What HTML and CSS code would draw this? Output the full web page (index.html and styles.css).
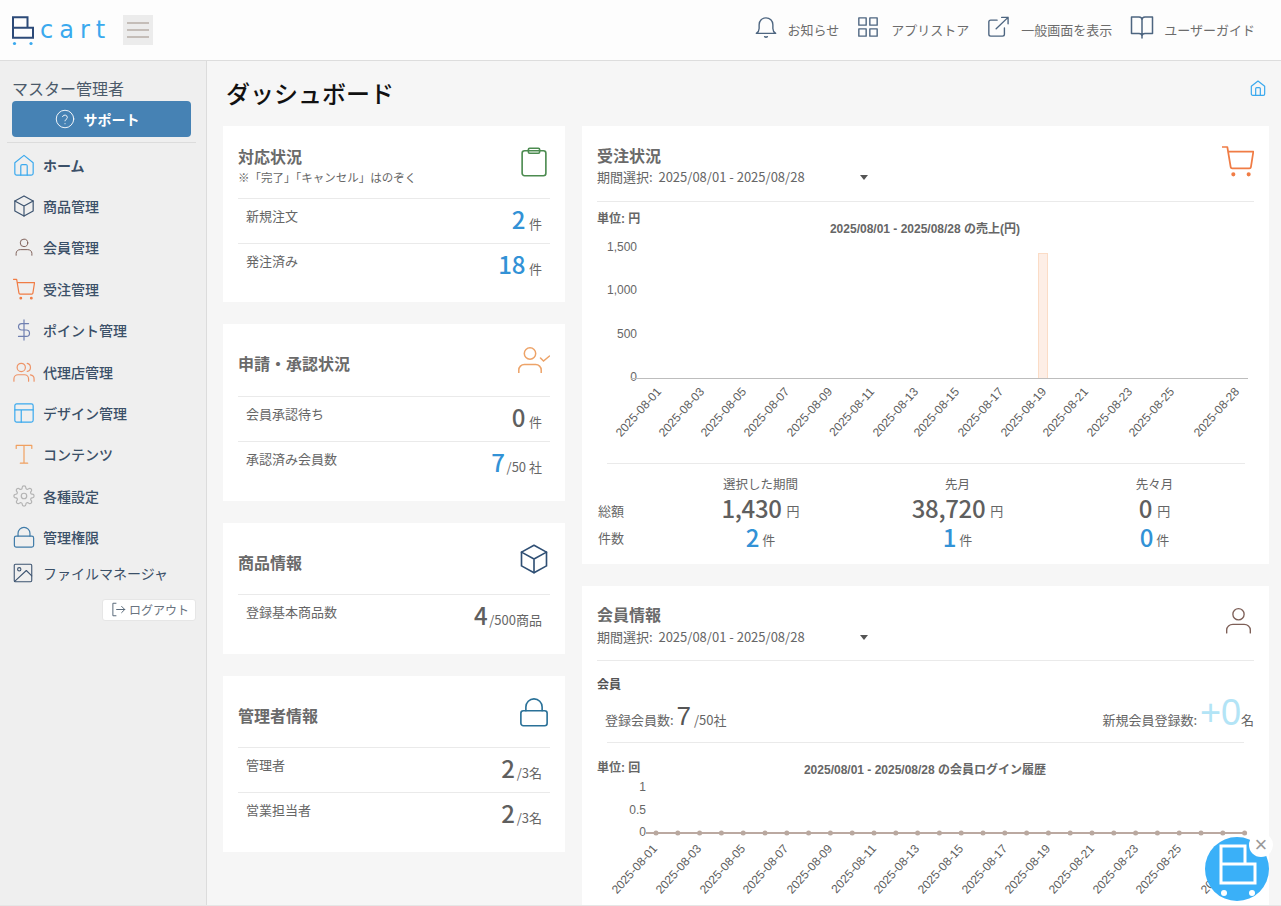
FILE: index.html
```html
<!DOCTYPE html>
<html lang="ja">
<head>
<meta charset="utf-8">
<title>ダッシュボード</title>
<link rel="stylesheet" href="styles.css">
</head>
<body>
<svg class="defs" width="0" height="0" aria-hidden="true">
  <symbol id="i-home" viewBox="0 0 24 24"><path d="M2 9.500 12 1.500l10 8V21a2 2 0 0 1-2 2H4a2 2 0 0 1-2-2z"/><path d="M8.500 23V13a1.500 1.500 0 0 1 1.500-1.500h4a1.500 1.500 0 0 1 1.500 1.500v10"/></symbol>
  <symbol id="i-box" viewBox="0 0 24 24"><path d="M12 1 22 6.500v11L12 23 2 17.500v-11z"/><path d="M2 6.500 12 12l10-5.500M12 12v11"/></symbol>
  <symbol id="i-user" viewBox="0 0 24 24"><circle cx="12" cy="6.500" r="5"/><path d="M1.500 23v-2.500c0-3 2.500-5 5.500-5h10c3 0 5.500 2 5.500 5V23"/></symbol>
  <symbol id="i-cart" viewBox="0 0 24 24"><path d="M.5 1.500h3.500l2.500 15c.1.600.5 1 1.100 1h13c.6 0 1-.4 1.100-1L23.500 5H4.500"/><circle class="dot" cx="8.500" cy="22" r=".9"/><circle class="dot" cx="20" cy="22" r=".9"/></symbol>
  <symbol id="i-dollar" viewBox="0 0 24 24"><path d="M12 1v22M17 5H9.500a3.500 3.500 0 0 0 0 7h5a3.500 3.500 0 0 1 0 7H6"/></symbol>
  <symbol id="i-users" viewBox="0 0 24 24"><circle cx="9" cy="7" r="4.500"/><path d="M1 22v-2.500c0-2.700 2.200-4.500 4.500-4.500h7c2.300 0 4.500 1.800 4.500 4.500V22M15.500 2.600a4.500 4.500 0 0 1 0 8.800M19 15.200c2.300.4 4 2.200 4 4.300V22"/></symbol>
  <symbol id="i-layout" viewBox="0 0 24 24"><rect x="2" y="2" width="20" height="20" rx="2"/><path d="M2 8.500h20M9 8.500V22"/></symbol>
  <symbol id="i-text" viewBox="0 0 24 24"><path d="M3.500 6V2.500h17V6M12 2.500V22M8 22h8"/></symbol>
  <symbol id="i-gear" viewBox="0 0 24 24"><circle cx="12" cy="12" r="3"/><path d="M19.400 15a1.650 1.650 0 0 0 .33 1.820l.06.06a2 2 0 0 1 0 2.830 2 2 0 0 1-2.830 0l-.06-.06a1.650 1.650 0 0 0-1.820-.33 1.650 1.650 0 0 0-1 1.510V21a2 2 0 0 1-2 2 2 2 0 0 1-2-2v-.09A1.650 1.650 0 0 0 9 19.400a1.650 1.650 0 0 0-1.820.33l-.06.06a2 2 0 0 1-2.830 0 2 2 0 0 1 0-2.830l.06-.06a1.650 1.650 0 0 0 .33-1.820 1.650 1.650 0 0 0-1.510-1H3a2 2 0 0 1-2-2 2 2 0 0 1 2-2h.09A1.650 1.650 0 0 0 4.600 9a1.650 1.650 0 0 0-.33-1.820l-.06-.06a2 2 0 0 1 0-2.830 2 2 0 0 1 2.830 0l.06.06a1.650 1.650 0 0 0 1.820.33H9a1.650 1.650 0 0 0 1-1.510V3a2 2 0 0 1 2-2 2 2 0 0 1 2 2v.09a1.650 1.650 0 0 0 1 1.510 1.650 1.650 0 0 0 1.820-.33l.06-.06a2 2 0 0 1 2.830 0 2 2 0 0 1 0 2.830l-.06.06a1.650 1.650 0 0 0-.33 1.820V9a1.650 1.650 0 0 0 1.510 1H21a2 2 0 0 1 2 2 2 2 0 0 1-2 2h-.09a1.650 1.650 0 0 0-1.510 1z"/></symbol>
  <symbol id="i-lock" viewBox="0 0 24 24"><rect x="1.500" y="11" width="21" height="12" rx="2"/><path d="M5.500 11V8a6.500 6.500 0 0 1 13 0v3"/></symbol>
  <symbol id="i-image" viewBox="0 0 24 24"><rect x="1.500" y="1.500" width="21" height="21" rx="1.500"/><circle cx="7.500" cy="7.500" r="2"/><path d="M22.500 15.500 16 9 2 22"/></symbol>
  <symbol id="i-bell" viewBox="0 0 24 24"><path d="M1.500 19h21c-2-1.500-3-3-3-5.500V9.500a7.500 7.500 0 0 0-15 0v4c0 2.500-1 4-3 5.500zM10.500 22.500c.8.700 2.200.7 3 0"/></symbol>
  <symbol id="i-grid" viewBox="0 0 24 24"><rect x="2" y="2" width="8" height="8"/><rect x="14" y="2" width="8" height="8"/><rect x="2" y="14" width="8" height="8"/><rect x="14" y="14" width="8" height="8"/></symbol>
  <symbol id="i-share" viewBox="0 0 24 24"><path d="M11 4.500H4a2 2 0 0 0-2 2V20a2 2 0 0 0 2 2h13a2 2 0 0 0 2-2v-7M10 14 23 1.500M16 1.500h7v7"/></symbol>
  <symbol id="i-book" viewBox="0 0 24 24"><path d="M12 5a3 3 0 0 0-3-3H1.500v16.500H9c1.700 0 3 .8 3 2.500 0-1.700 1.300-2.500 3-2.500h7.500V2H15a3 3 0 0 0-3 3zM12 5v18"/></symbol>
  <symbol id="i-clip" viewBox="0 0 24 24"><rect x="2.500" y="3" width="19" height="20" rx="2"/><rect x="7.500" y="1" width="9" height="4" rx="1"/></symbol>
  <symbol id="i-help" viewBox="0 0 24 24"><circle cx="12" cy="12" r="10.500"/><path d="M9 9.200a3 3 0 0 1 5.800 1c0 2-2.800 2.300-2.800 4M12 17.500v.3"/></symbol>
  <symbol id="i-logout" viewBox="0 0 24 24"><path d="M8 2H3v20h5M9 12h13M17 7l5 5-5 5"/></symbol>
</svg>

<div class="app">
  <header class="topbar">
    <div class="brand">
      <svg class="brand-mark" viewBox="0 0 24 32"><path class="brand-box" d="M1 1.200h14.500v10.500H21v10H1zM1 11.700h14.500"/><circle class="brand-dot" cx="2.500" cy="27.500" r="1.600"/><circle class="brand-dot" cx="19" cy="27.500" r="1.600"/></svg>
      <span class="brand-name">cart</span>
      <button class="burger" type="button" aria-label="menu"><span></span><span></span><span></span></button>
    </div>
    <nav class="toplinks">
      <a class="toplink"><svg class="ico ic-top top-bell"><use href="#i-bell"/></svg>お知らせ</a>
      <a class="toplink"><svg class="ico ic-top top-grid"><use href="#i-grid"/></svg>アプリストア</a>
      <a class="toplink"><svg class="ico ic-top top-share"><use href="#i-share"/></svg>一般画面を表示</a>
      <a class="toplink"><svg class="ico ic-top top-book"><use href="#i-book"/></svg>ユーザーガイド</a>
    </nav>
  </header>

  <div class="body">
    <aside class="sidebar">
      <div class="account">マスター管理者</div>
      <a class="support"><svg class="ico ic-white"><use href="#i-help"/></svg>サポート</a>
      <ul class="menu">
        <li class="menu-item is-active"><svg class="ico c-blue"><use href="#i-home"/></svg>ホーム</li>
        <li class="menu-item"><svg class="ico c-navy"><use href="#i-box"/></svg>商品管理</li>
        <li class="menu-item"><svg class="ico c-brown ico-small"><use href="#i-user"/></svg>会員管理</li>
        <li class="menu-item"><svg class="ico c-orange"><use href="#i-cart"/></svg>受注管理</li>
        <li class="menu-item"><svg class="ico c-indigo"><use href="#i-dollar"/></svg>ポイント管理</li>
        <li class="menu-item"><svg class="ico c-peach"><use href="#i-users"/></svg>代理店管理</li>
        <li class="menu-item"><svg class="ico c-blue"><use href="#i-layout"/></svg>デザイン管理</li>
        <li class="menu-item"><svg class="ico c-amber"><use href="#i-text"/></svg>コンテンツ</li>
        <li class="menu-item"><svg class="ico c-grey"><use href="#i-gear"/></svg>各種設定</li>
        <li class="menu-item"><svg class="ico c-steel"><use href="#i-lock"/></svg>管理権限</li>
        <li class="menu-item is-plain"><svg class="ico c-navy ico-mid"><use href="#i-image"/></svg>ファイルマネージャ</li>
      </ul>
      <div class="logout-row"><a class="logout"><svg class="ico c-slate"><use href="#i-logout"/></svg>ログアウト</a></div>
    </aside>

    <main class="main">
      <div class="page-head">
        <h1>ダッシュボード</h1>
        <svg class="ico crumb c-blue"><use href="#i-home"/></svg>
      </div>

      <div class="columns">
        <div class="col-left">
          <section class="card card-tight">
            <div class="card-head">
              <div><h2>対応状況</h2><p class="note">※「完了」「キャンセル」はのぞく</p></div>
              <svg class="ico big c-green"><use href="#i-clip"/></svg>
            </div>
            <div class="row"><span>新規注文</span><span class="val"><b class="num-blue">2</b><i>件</i></span></div>
            <div class="row"><span>発注済み</span><span class="val"><b class="num-blue">18</b><i>件</i></span></div>
          </section>

          <section class="card">
            <div class="card-head head-center">
              <h2>申請・承認状況</h2>
              <svg class="person-check" viewBox="0 0 32 26"><circle cx="12" cy="6.500" r="5.700"/><path d="M.8 26v-3c0-3 2.500-5.500 5.500-5.500h11.400c3 0 5.500 2.500 5.500 5.500v3M22.500 11l3 3 6-5"/></svg>
            </div>
            <div class="row"><span>会員承認待ち</span><span class="val"><b>0</b><i>件</i></span></div>
            <div class="row"><span>承認済み会員数</span><span class="val"><b class="num-blue">7</b><i class="frac">/50 社</i></span></div>
          </section>

          <section class="card">
            <div class="card-head head-center head-short">
              <h2>商品情報</h2>
              <svg class="ico big c-navy2"><use href="#i-box"/></svg>
            </div>
            <div class="row"><span>登録基本商品数</span><span class="val"><b>4</b><i class="frac">/500商品</i></span></div>
          </section>

          <section class="card">
            <div class="card-head head-center head-short">
              <h2>管理者情報</h2>
              <svg class="ico big c-teal"><use href="#i-lock"/></svg>
            </div>
            <div class="row"><span>管理者</span><span class="val"><b>2</b><i class="frac">/3名</i></span></div>
            <div class="row"><span>営業担当者</span><span class="val"><b>2</b><i class="frac">/3名</i></span></div>
          </section>
        </div>

        <div class="col-right">
          <section class="card wide sales">
            <div class="wide-head">
              <div>
                <h2>受注状況</h2>
                <div class="period"><span>期間選択:&nbsp; 2025/08/01 - 2025/08/28</span><span class="caret"></span></div>
              </div>
              <svg class="ico cart-big c-orange"><use href="#i-cart"/></svg>
            </div>
            <svg class="chart chart-sales" viewBox="597 202 657 261">
              <text class="t-bold" x="597" y="223">単位: 円</text>
              <text class="t-bold mid" x="925" y="233">2025/08/01 - 2025/08/28 の売上(円)</text>
              <text class="t end" x="637" y="251">1,500</text>
              <text class="t end" x="637" y="294">1,000</text>
              <text class="t end" x="637" y="338">500</text>
              <text class="t end" x="637" y="381">0</text>
              <rect class="bar" x="1038.500" y="253.500" width="9" height="125"/>
              <line class="axis" x1="631" y1="378.500" x2="1248" y2="378.500"/>
              <text class="t rot end" transform="rotate(-48 662 392)" x="662" y="392">2025-08-01</text>
              <text class="t rot end" transform="rotate(-48 705 392)" x="705" y="392">2025-08-03</text>
              <text class="t rot end" transform="rotate(-48 747 392)" x="747" y="392">2025-08-05</text>
              <text class="t rot end" transform="rotate(-48 790 392)" x="790" y="392">2025-08-07</text>
              <text class="t rot end" transform="rotate(-48 833 392)" x="833" y="392">2025-08-09</text>
              <text class="t rot end" transform="rotate(-48 875 392)" x="875" y="392">2025-08-11</text>
              <text class="t rot end" transform="rotate(-48 919 392)" x="919" y="392">2025-08-13</text>
              <text class="t rot end" transform="rotate(-48 960 392)" x="960" y="392">2025-08-15</text>
              <text class="t rot end" transform="rotate(-48 1004 392)" x="1004" y="392">2025-08-17</text>
              <text class="t rot end" transform="rotate(-48 1047 392)" x="1047" y="392">2025-08-19</text>
              <text class="t rot end" transform="rotate(-48 1089 392)" x="1089" y="392">2025-08-21</text>
              <text class="t rot end" transform="rotate(-48 1133 392)" x="1133" y="392">2025-08-23</text>
              <text class="t rot end" transform="rotate(-48 1175 392)" x="1175" y="392">2025-08-25</text>
              <text class="t rot end" transform="rotate(-48 1240 392)" x="1240" y="392">2025-08-28</text>
            </svg>
            <div class="summary">
              <span></span><span class="s-head">選択した期間</span><span class="s-head">先月</span><span class="s-head">先々月</span>
              <span class="s-label s-label-total">総額</span>
              <span class="s-cell"><b>1,430</b><i>円</i></span>
              <span class="s-cell"><b>38,720</b><i>円</i></span>
              <span class="s-cell"><b>0</b><i>円</i></span>
              <span class="s-label s-label-count">件数</span>
              <span class="s-cell s-count"><b>2</b><i>件</i></span>
              <span class="s-cell s-count"><b>1</b><i>件</i></span>
              <span class="s-cell s-count"><b>0</b><i>件</i></span>
            </div>
          </section>

          <section class="card wide members">
            <div class="wide-head head-member">
              <div>
                <h2>会員情報</h2>
                <div class="period"><span>期間選択:&nbsp; 2025/08/01 - 2025/08/28</span><span class="caret"></span></div>
              </div>
              <svg class="ico user-big c-brown"><use href="#i-user"/></svg>
            </div>
            <h3>会員</h3>
            <div class="member-stats">
              <span>登録会員数: <b class="m-num">7</b> <span class="m-small">/50社</span></span>
              <span>新規会員登録数: <b class="m-plus">+0</b>名</span>
            </div>
            <div class="rule"></div>
            <svg class="chart chart-login" viewBox="597 743 672 163">
              <text class="t-bold" x="597" y="772">単位: 回</text>
              <text class="t-bold mid" x="925" y="774">2025/08/01 - 2025/08/28 の会員ログイン履歴</text>
              <text class="t end" x="646" y="791">1</text>
              <text class="t end" x="646" y="814">0.5</text>
              <text class="t end" x="646" y="836">0</text>
              <line class="axis-login" x1="646" y1="833" x2="1247" y2="833"/>
              <g class="pts">
                <circle cx="656" cy="833" r="2.500"/><circle cx="677.800" cy="833" r="2.500"/><circle cx="699.600" cy="833" r="2.500"/><circle cx="721.400" cy="833" r="2.500"/><circle cx="743.200" cy="833" r="2.500"/><circle cx="765" cy="833" r="2.500"/><circle cx="786.800" cy="833" r="2.500"/><circle cx="808.600" cy="833" r="2.500"/><circle cx="830.400" cy="833" r="2.500"/><circle cx="852.200" cy="833" r="2.500"/><circle cx="874" cy="833" r="2.500"/><circle cx="895.800" cy="833" r="2.500"/><circle cx="917.600" cy="833" r="2.500"/><circle cx="939.400" cy="833" r="2.500"/><circle cx="961.200" cy="833" r="2.500"/><circle cx="983" cy="833" r="2.500"/><circle cx="1004.800" cy="833" r="2.500"/><circle cx="1026.600" cy="833" r="2.500"/><circle cx="1048.400" cy="833" r="2.500"/><circle cx="1070.200" cy="833" r="2.500"/><circle cx="1092" cy="833" r="2.500"/><circle cx="1113.800" cy="833" r="2.500"/><circle cx="1135.600" cy="833" r="2.500"/><circle cx="1157.400" cy="833" r="2.500"/><circle cx="1179.200" cy="833" r="2.500"/><circle cx="1201" cy="833" r="2.500"/><circle cx="1222.800" cy="833" r="2.500"/><circle cx="1244.600" cy="833" r="2.500"/>
              </g>
              <text class="t rot end" transform="rotate(-48 658 849)" x="658" y="849">2025-08-01</text>
              <text class="t rot end" transform="rotate(-48 702 849)" x="702" y="849">2025-08-03</text>
              <text class="t rot end" transform="rotate(-48 746 849)" x="746" y="849">2025-08-05</text>
              <text class="t rot end" transform="rotate(-48 789 849)" x="789" y="849">2025-08-07</text>
              <text class="t rot end" transform="rotate(-48 833 849)" x="833" y="849">2025-08-09</text>
              <text class="t rot end" transform="rotate(-48 877 849)" x="877" y="849">2025-08-11</text>
              <text class="t rot end" transform="rotate(-48 920 849)" x="920" y="849">2025-08-13</text>
              <text class="t rot end" transform="rotate(-48 964 849)" x="964" y="849">2025-08-15</text>
              <text class="t rot end" transform="rotate(-48 1008 849)" x="1008" y="849">2025-08-17</text>
              <text class="t rot end" transform="rotate(-48 1051 849)" x="1051" y="849">2025-08-19</text>
              <text class="t rot end" transform="rotate(-48 1095 849)" x="1095" y="849">2025-08-21</text>
              <text class="t rot end" transform="rotate(-48 1139 849)" x="1139" y="849">2025-08-23</text>
              <text class="t rot end" transform="rotate(-48 1182 849)" x="1182" y="849">2025-08-25</text>
              <text class="t rot end" transform="rotate(-48 1247 849)" x="1247" y="849">2025-08-28</text>
            </svg>
          </section>
        </div>
      </div>
    </main>
  </div>
</div>

<div class="bubble">
  <svg viewBox="0 0 64 64"><path class="bubble-line" d="M16 9h24v18h10v19H16zM16 27h24"/><circle class="bubble-dot" cx="19" cy="56" r="3"/><circle class="bubble-dot" cx="47" cy="56" r="3"/></svg>
  <span class="bubble-close">×</span>
</div>
</body>
</html>
```

FILE: styles.css
```css
* { box-sizing: border-box; }
html, body { margin: 0; padding: 0; height: 906px; overflow: hidden; }
body { font-family: "Noto Sans CJK JP", "Noto Sans", sans-serif; font-size: 13px; color: #666; background: #f6f6f6; position: relative; }
h1, h2, h3, p, ul { margin: 0; padding: 0; }
ul { list-style: none; }
i { font-style: normal; }
.defs { position: absolute; }

.ico { display: block; fill: none; stroke: currentColor; stroke-width: 1.500; stroke-linecap: round; stroke-linejoin: round; flex: none; }
.dot { fill: currentColor; }
.c-blue { color: #3aa9ee; }
.c-navy { color: #3d5470; }
.c-navy2 { color: #2f4f74; }
.c-brown { color: #7d5f57; }
.c-orange { color: #f07c45; }
.c-indigo { color: #6f7fb0; }
.c-peach { color: #ee9468; }
.c-amber { color: #f0a060; }
.c-grey { color: #b4b4b4; }
.c-steel { color: #3f7ba8; }
.c-teal { color: #2a7198; }
.c-green { color: #4c8b50; }
.c-slate { color: #5a6a7a; }

.app { height: 906px; display: flex; flex-direction: column; }
.topbar { height: 61px; flex: none; background: #fdfdfd; border-bottom: 1px solid #ddd; display: flex; align-items: center; justify-content: space-between; padding: 0 26px 0 12px; }
.brand { display: flex; align-items: center; }
.brand-mark { width: 24px; height: 32px; margin-top: 3px; }
.brand-box { fill: none; stroke: #2c4a78; stroke-width: 2; }
.brand-dot { fill: #3aa9ee; }
.brand-name { font-family: "DejaVu Sans", sans-serif; font-weight: 400; font-size: 24px; letter-spacing: 6px; color: #3aa9ee; line-height: 30px; margin-left: 4px; width: 83px; }
.burger { width: 30px; height: 30px; background: #ececec; border: 0; padding: 0 4px; display: flex; flex-direction: column; gap: 5px; justify-content: center; }
.burger span { display: block; height: 2px; background: #c4bdb8; }
.toplinks { display: flex; align-items: center; }
.toplink { display: flex; align-items: center; color: #6c6c6c; font-size: 13px; line-height: 18px; margin-left: 18px; }
.ic-top { color: #4d6580; margin-right: 12px; }
.top-bell { width: 22px; height: 24px; margin-top: -6px; margin-right: 10px; }
.top-grid { width: 22px; height: 22px; margin-top: -6px; }
.top-share { width: 22px; height: 22px; margin-top: -6px; }
.top-book { width: 24px; height: 24px; margin-top: -6px; margin-right: 10px; }

.body { flex: 1; display: flex; min-height: 0; border-bottom: 1px solid #e6e6e6; }
.sidebar { width: 207px; flex: none; background: #efefef; border-right: 1px solid #dcdcdc; padding: 15px 10px 0 12px; }
.account { font-size: 16px; line-height: 24px; margin-bottom: 1px; color: #4b5a6a; }
.support { height: 36px; width: 179px; background: #4682b4; border-radius: 4px; display: flex; align-items: center; justify-content: center; gap: 9px; color: #fff; font-weight: 700; font-size: 14px; padding-right: 9px; }
.ic-white { color: #fff; width: 20px; height: 20px; stroke-width: 1.100; }
.menu { margin: 5px 0 0 -5px; border-top: 1px solid #dcdcdc; padding-top: 1px; }
.menu-item { height: 41.400px; display: flex; align-items: center; gap: 8px; padding-left: 5px; font-size: 14px; font-weight: 500; color: #3b5068; }
.menu-item .ico { width: 22px; height: 22px; margin-left: 1px; stroke-width: 1.300; }
.menu-item .ico-small { width: 18px; height: 18px; margin: 0 2px 0 3px; }
.menu-item .ico-mid { width: 20px; height: 20px; margin: 0 2px 0 1px; }
.is-active { font-weight: 700; }
.menu .is-plain { font-weight: 400; height: 31px; }
.logout-row { display: flex; justify-content: flex-end; margin: 10px 0 0 0; }
.logout { width: 94px; height: 22px; background: #fff; border: 1px solid #e6e6e6; border-radius: 3px; display: flex; align-items: center; justify-content: flex-end; padding-right: 6px; gap: 3px; font-size: 12px; color: #6a7480; }
.logout .ico { width: 15px; height: 15px; stroke-width: 1.600; }

.main { flex: 1; min-width: 0; background: #f6f6f6; padding: 0 12px 0 16px; overflow: hidden; }
.page-head { height: 65px; display: flex; justify-content: space-between; align-items: flex-start; }
.page-head h1 { font-size: 24px; font-weight: 500; color: #111; line-height: 34px; margin: 15px 0 0 3px; }
.crumb { width: 16px; height: 16px; margin-top: 19px; stroke-width: 1.800; margin-right: 3px; }
.columns { display: flex; gap: 17px; align-items: flex-start; }
.col-left { width: 342px; flex: none; display: flex; flex-direction: column; gap: 22px; }
.col-right { width: 687px; flex: none; display: flex; flex-direction: column; gap: 22px; }

.card { background: #fff; padding: 15px; }
.card-tight { padding-bottom: 14px; }
.card-head { height: 57px; display: flex; justify-content: space-between; align-items: flex-start; }
.head-short { height: 56px; }
.card h2 { font-size: 16px; font-weight: 700; color: #6a6a6a; line-height: 22px; margin-top: 4px; }
.head-center { align-items: center; padding-bottom: 9px; }
.card .head-center h2 { margin-top: 0; }
.note { font-size: 11.500px; color: #666; line-height: 16px; margin-top: 2px; }
.big { width: 30px; height: 30px; margin: 6px 1px 0 0; stroke-width: 1.300; align-self: flex-start; }
.person-check { width: 32px; height: 26px; fill: none; stroke: #eda368; stroke-width: 1.500; stroke-linecap: round; align-self: flex-start; margin-top: 8px; }
.row { height: 45px; border-top: 1px solid #eaeaea; display: flex; justify-content: space-between; align-items: flex-start; padding: 0 8px; line-height: 20px; color: #666; font-size: 13px; }
.row > span:first-child { margin-top: 7px; }
.val { display: flex; align-items: baseline; margin-top: 3px; line-height: 34px; font-size: 13px; }
.val b { font-size: 24px; font-weight: 500; letter-spacing: -.35px; color: #5f5f5f; margin-right: 4px; }
.val .num-blue { color: #3292d6; }
.frac { margin-left: -2px; }

.wide-head { height: 61px; border-bottom: 1px solid #eaeaea; display: flex; justify-content: space-between; align-items: flex-start; }
.card .wide-head h2 { margin-top: 3px; }
.period { display: flex; align-items: center; font-size: 13px; line-height: 20px; color: #666; margin-top: 1px; }
.caret { width: 0; height: 0; border: 4px solid transparent; border-top: 5px solid #555; border-bottom: 0; margin-left: 55px; }
.cart-big { width: 32px; height: 32px; margin: 4px 0 0 0; stroke-width: 1.300; }
.user-big { width: 27px; height: 27px; margin: 6px 2px 0 0; stroke-width: 1.200; }
.chart { display: block; }
.chart-sales { width: 657px; height: 261px; }
.t, .t-bold { font-family: "Liberation Sans", "Noto Sans CJK JP", sans-serif; font-size: 12px; fill: #666; }
.t-bold { font-weight: 700; }
.t.rot { opacity: .99; fill: #5c5c5c; }
.mid { text-anchor: middle; }
.end { text-anchor: end; }
.bar { fill: #fdeee6; stroke: #fbdcc6; stroke-width: 1; }
.axis { stroke: #bdbdbd; stroke-width: 1; }
.axis-login { stroke: #bba9a1; stroke-width: 2; }
.pts circle { fill: #b9a89f; }

.sales { padding-bottom: 12px; }
.summary { border-top: 1px solid #eaeaea; display: grid; grid-template-columns: 55px repeat(3, 197px); grid-template-rows: 20px 28px 30px; margin: 0 9px 0 10px; padding-top: 10px; }
.summary > span { text-align: center; color: #666; }
.s-head { font-size: 12.500px; line-height: 20px; }
.summary .s-label { text-align: left; margin-left: -9px; font-size: 13px; line-height: 20px; }
.summary .s-label-total { margin-top: 7px; }
.summary .s-label-count { margin-top: 6px; }
.s-cell { display: flex; justify-content: center; align-items: center; height: 28px; line-height: 28px; }
.s-cell b { font-size: 24px; font-weight: 500; letter-spacing: -.35px; color: #5f5f5f; margin-right: 5px; }
.s-cell i { font-size: 13px; margin-top: 6px; }
.summary .s-count { margin-top: 1px; }
.s-count b { color: #3292d6; margin-right: 3px; }

.members { padding-bottom: 0; height: 330px; }
.card .head-member { height: 60px; }
.card .head-member h2 { margin-top: 2px; }
.head-member .period { margin-top: 2px; }
.members h3 { font-size: 12px; font-weight: 700; color: #555; line-height: 18px; margin-top: 14px; }
.member-stats { display: flex; justify-content: space-between; align-items: flex-end; height: 49px; margin: 0 0 0 8px; padding-bottom: 4px; font-size: 13px; line-height: 36px; color: #666; }
.m-num { font-family: "Liberation Sans", sans-serif; font-size: 26px; font-weight: 400; color: #555; }
.m-small { font-size: 13px; }
.m-plus { font-family: "Liberation Sans", sans-serif; font-size: 36px; font-weight: 400; color: #b3e4f6; }
.rule { height: 1px; background: #eaeaea; margin: 0 10px; }
.chart-login { width: 672px; height: 163px; }

.bubble { position: absolute; left: 1205px; top: 837px; width: 64px; height: 64px; border-radius: 50%; background: #3ab0f8; }
.bubble svg { display: block; width: 64px; height: 64px; }
.bubble-line { fill: none; stroke: #fff; stroke-width: 3; }
.bubble-dot { fill: #fff; }
.bubble-close { position: absolute; left: 44px; top: -4px; width: 24px; height: 24px; border-radius: 50%; background: #fff; color: #999; font-family: "Liberation Sans", sans-serif; font-size: 22px; line-height: 23px; text-align: center; }
```
